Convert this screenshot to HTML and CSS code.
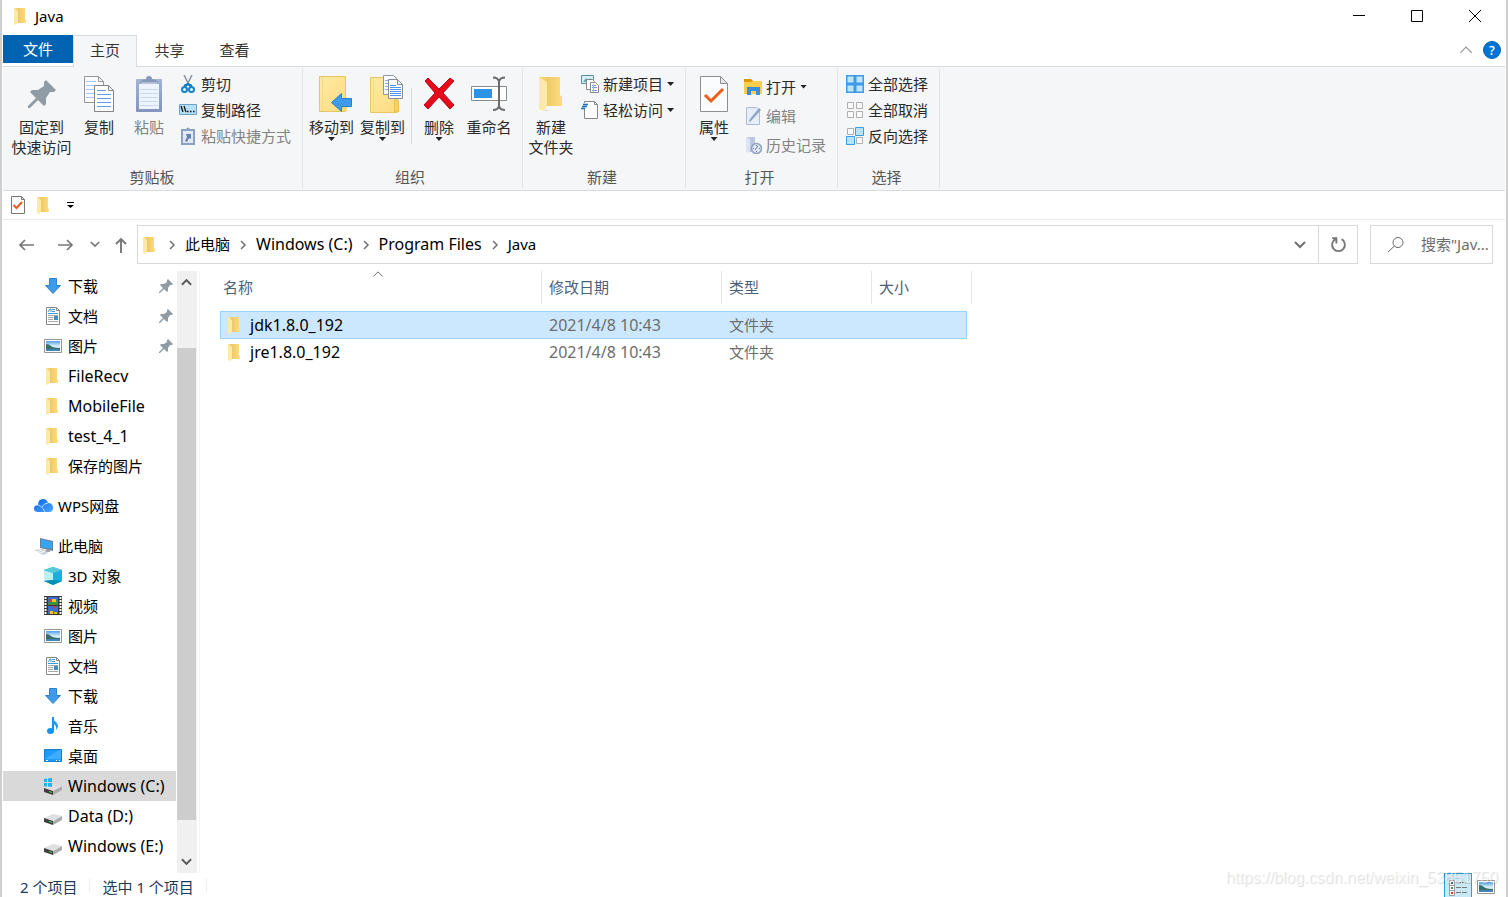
FILE: index.html
```html
<!DOCTYPE html>
<html lang="zh-CN">
<head>
<meta charset="utf-8">
<title>Java</title>
<link rel="stylesheet" href="styles.css">
</head>
<body>
<svg class="sprite" aria-hidden="true">
  <defs>
    <linearGradient id="gFold" x1="0" x2="1" y1="0" y2="1"><stop offset="0" stop-color="#ffeaa4"/><stop offset="1" stop-color="#ffdb80"/></linearGradient>
    <linearGradient id="gBack" x1="0" x2="1"><stop offset="0" stop-color="#e8c461"/><stop offset="1" stop-color="#ffdc80"/></linearGradient>
    <linearGradient id="gCloud" x1="0" x2="1" y1="0" y2="1"><stop offset="0" stop-color="#0a62ee"/><stop offset="1" stop-color="#4aa8fb"/></linearGradient>
    <linearGradient id="gSky" x1="0" x2="0" y1="0" y2="1"><stop offset="0" stop-color="#4f9fe8"/><stop offset=".5" stop-color="#d8effa"/><stop offset="1" stop-color="#8cc4e6"/></linearGradient>
    <linearGradient id="gPaste" x1="0" x2="0" y1="0" y2="1"><stop offset="0" stop-color="#a3b3d3"/><stop offset="1" stop-color="#8294bd"/></linearGradient>
  </defs>
  <symbol id="folder" viewBox="0 0 14 18"><path d="M3 1h9v11l1 1v3H3z" fill="url(#gBack)"/><path d="M1 1l4 3v12l-2 2-2-1z" fill="#ffe9a6"/><path d="M1 1h3l1 3z" fill="#f5d67b"/></symbol>
  <symbol id="bigfolder" viewBox="0 0 26 38"><path d="M5 2h17v18l2 2v9H5z" fill="url(#gBack)"/><path d="M1 2l8 5v23l-3 6-5-2z" fill="#ffe9a6"/><path d="M1 2h6l2 5z" fill="#f3d272"/><path d="M6 36l2-1h3l-3 1z" fill="#ccc"/></symbol>
  <symbol id="pin" viewBox="0 0 14 14"><path d="M9 0l5 5-1 1-2 0-2 3 0 3-1 1-3-3-4 4-1 0 0-1 4-4-3-3 1-1h3l3-2 0-2z" fill="#8f9ca6"/></symbol>
  <symbol id="copy" viewBox="0 0 32 38"><path d="M1.500 1.500h14l5 5v21h-19z" fill="#fafbfc" stroke="#969696"/><path d="M15.500 1.500v5h5" fill="none" stroke="#969696"/><path d="M3 6.500h10M3 10.500h12M3 14.500h12M3 18.500h12M3 22.500h12" stroke="#a9c6f7"/><path d="M11.500 10.500h14l5 5v21h-19z" fill="#fff" stroke="#858585"/><path d="M25.500 10.500v5h5" fill="none" stroke="#858585"/><path d="M14 15.500h9M14 19.500h14M14 23.500h14M14 27.500h14M14 31.500h14" stroke="#5a9bf5"/></symbol>
  <symbol id="paste" viewBox="0 0 28 38"><rect x="1" y="4" width="26" height="33" rx="1" fill="url(#gPaste)"/><path d="M4 9h20v25H4z" fill="#eef4fd"/><path d="M5 14.500h18M5 18.500h18M5 22.500h18M5 26.500h18M5 30.500h18" stroke="#c6d8f3"/><path d="M5 8q0-3 6-4 0-3 3-3t3 3q6 1 6 4z" fill="#8799bd"/><path d="M6 8h16" stroke="#d3dced"/></symbol>
  <symbol id="cut" viewBox="0 0 18 18"><path d="M5 0l6 12M13 0L7 12" stroke="#8a939c" stroke-width="1.500"/><path d="M9 9l-4 2M9 9l4 2" stroke="#0079c1" stroke-width="2"/><circle cx="5.500" cy="14.500" r="2.500" fill="none" stroke="#1585ca" stroke-width="2"/><circle cx="12.500" cy="14.500" r="2.500" fill="none" stroke="#1585ca" stroke-width="2"/></symbol>
  <symbol id="path" viewBox="0 0 18 18"><path d="M.500 3.500h17v10H.500z" fill="#b5e0fc" stroke="#6fa0c5"/><path d="M2 5l2 6M5 5l2 6" stroke="#111" stroke-width="1.300"/><path d="M8 10.500h1.500M11 10.500h1.500M14 10.500h1.500" stroke="#111" stroke-width="1.500"/></symbol>
  <symbol id="pastelink" viewBox="0 0 18 18"><path d="M3 3h12v14H3z" fill="#e1e9f5" stroke="#8ba0c2" stroke-width="2"/><path d="M5 4l2-2q2-3 4 0l2 2z" fill="#8ba0c2"/><path d="M7 7h5v5l-2-1-2 4-2-1 2-4z" fill="#6581ac"/></symbol>
  <symbol id="moveto" viewBox="0 0 34 38"><path d="M1.500 1.500h26v35h-26z" fill="url(#gFold)" stroke="#e8c660"/><path d="M4.500 2v34" stroke="#f5d986"/><path d="M24 36v-12q3-5 5 0v12z" fill="#f9d773"/><path d="M13.500 27.500l10-9v5h10v8h-10v5z" fill="#3d9be9" stroke="#2b80c8"/></symbol>
  <symbol id="copyto" viewBox="0 0 34 40"><path d="M1.500 3.500h26v35h-26z" fill="url(#gFold)" stroke="#e8c660"/><path d="M4.500 4v34" stroke="#f5d986"/><path d="M25.500 38V27q2-4 4 0v11z" fill="#f6d16a" stroke="#e8bf50"/><path d="M14.500 1.500h10l3 3v16h-13z" fill="#f8fbff" stroke="#8e969e"/><path d="M16 6.500h4M16 9.500h3M16 12.500h3M16 15.500h3" stroke="#80aef0"/><path d="M19.500 5.500h9l5 5v14h-14z" fill="#fff" stroke="#858b92"/><path d="M28.500 5.500v5h5" fill="none" stroke="#858b92"/><path d="M21 11.500h6M21 13.500h11M21 15.500h11M21 17.500h11M21 19.500h11M21 21.500h11" stroke="#4b92f3"/></symbol>
  <symbol id="delete" viewBox="0 0 34 34"><path d="M3 4l3-3 11 11L28 1l4 3-11 12 11 12-4 4-11-12L6 32l-4-4 11-12z" fill="#e50b1b" stroke="#b70d19"/></symbol>
  <symbol id="rename" viewBox="0 0 38 36"><path d="M1.500 10.500h35v14h-35z" fill="#fff" stroke="#8a8a8a"/><path d="M4 13h18v9H4z" fill="#2e93e5"/><path d="M29 3v30M23 1.500q5 0 6 4 1-4 6-4M23 34q5 0 6-4 1 4 6 4" fill="none" stroke="#6b6b6b" stroke-width="2"/></symbol>
  <symbol id="newitem" viewBox="0 0 18 18"><path d="M.500.500h12v8H.500z" fill="#d8f0fa" stroke="#5d8ba0"/><path d="M2 7l3-4 2 2 2-2 2 4z" fill="#58a8b4"/><path d="M5.500 4.500h6l2 2v8h-8z" fill="#fff" stroke="#888"/><path d="M9.500 7.500h5l3 3v7h-8z" fill="#fff" stroke="#888"/><path d="M11 10.500h4M11 12.500h5M11 15.500h5" stroke="#6f9de8"/><path d="M12.500 9v8" stroke="#f0a0a0"/></symbol>
  <symbol id="easy" viewBox="0 0 18 18"><path d="M3.500.500h10l3 3v14h-13z" fill="#fff" stroke="#888"/><path d="M13.500.500v3h3" fill="none" stroke="#888"/><path d="M1 2h6v6H0V4z" fill="#f5f6f7"/><path d="M2 3.500h5M1 5.500h5M-1 7.500h5" stroke="#1d72be" stroke-width="1.300"/></symbol>
  <symbol id="prop" viewBox="0 0 28 36"><path d="M.500.500h20l7 7v28H.500z" fill="#fbfcfd" stroke="#8e8e8e"/><path d="M20.500.500v7h7z" fill="#e6e8ea" stroke="#8e8e8e"/><path d="M5 19l6 6L23 13" fill="none" stroke="#f05a1a" stroke-width="3"/></symbol>
  <symbol id="check" viewBox="0 0 14 18"><path d="M.500.500h10l3 3v14H.500z" fill="#fbfcfd" stroke="#777"/><path d="M10.500.500v3h3" fill="none" stroke="#777"/><path d="M2.500 9l3 3L11 6" fill="none" stroke="#f05a1a" stroke-width="2"/></symbol>
  <symbol id="open" viewBox="0 0 18 18"><path d="M0 1h7l2 2h9v13H0z" fill="#ffcf4b"/><path d="M0 1h7l2 2-2 1H0z" fill="#d89a00"/><path d="M3 9h13v8h-4v-4H7v4H3z" fill="#3b8fd9"/></symbol>
  <symbol id="edit" viewBox="0 0 18 18"><path d="M2.500.500h10l3 3v14h-13z" fill="#e5edf8" stroke="#adbcd4"/><path d="M5 14l1 1L17 3l-2-2L6 12z" fill="#8fa5c8"/></symbol>
  <symbol id="history" viewBox="0 0 18 18"><path d="M3 1h8v15H3z" fill="#b9c8df"/><path d="M2 1l4 2v12l-2 2-2-1z" fill="#dae4f2"/><circle cx="12.500" cy="12.500" r="5" fill="#dfe8f4" stroke="#8c9fbd" stroke-width="1.500"/><path d="M12.500 9v1M12.500 15v1M9 12.500h1M15 12.500h1M11 14l3-4" stroke="#667c9e"/></symbol>
  <symbol id="selall" viewBox="0 0 18 18"><path d="M0 0h18v18H0z" fill="#3d9be9"/><path d="M1.500 1.500h6v6h-6zM10.500 1.500h6v6h-6zM1.500 10.500h6v6h-6zM10.500 10.500h6v6h-6z" fill="#c0e4fc"/></symbol>
  <symbol id="selnone" viewBox="0 0 18 18"><path d="M1.500 1.500h6v6h-6zM10.500 1.500h6v6h-6zM1.500 10.500h6v6h-6zM10.500 10.500h6v6h-6z" fill="#fafafa" stroke="#b0b0b0"/></symbol>
  <symbol id="selinv" viewBox="0 0 18 18"><path d="M1.500 1.500h6v6h-6zM10.500 10.500h6v6h-6z" fill="#fafafa" stroke="#b0b0b0"/><path d="M9.500.500h8v8h-8zM.500 9.500h8v8h-8z" fill="#b9e2fd" stroke="#3d9be9"/></symbol>
  <symbol id="down" viewBox="0 0 18 18"><path d="M5.500 1.500h7v7h4L9 16.500 1.500 8.500h4z" fill="#3d9be9" stroke="#2e82cb"/></symbol>
  <symbol id="doc" viewBox="0 0 18 18"><path d="M2.500.500h10l3 3v14h-13z" fill="#fff" stroke="#888"/><path d="M12.500.500v3h3" fill="none" stroke="#888"/><path d="M4 5l2-3h1v3M8 2.500h3M8 4.500h3M4 6.500h10" fill="none" stroke="#3c9ad8"/><path d="M4 8.500h10M4 10.500h5M4 12.500h5M4 14.500h10" stroke="#a8a8a8"/><path d="M10 9h4v4h-4z" fill="#3d8fcb"/></symbol>
  <symbol id="pic" viewBox="0 0 18 18"><path d="M.500 2.500h17v13H.500z" fill="#fff" stroke="#959595"/><path d="M2 4h14v10H2z" fill="url(#gSky)"/><path d="M2 7q3 0 5 2t9 2v1H2z" fill="#3b6d68"/><path d="M2 12h14v2H2z" fill="#4384b4"/></symbol>
  <symbol id="cloud" viewBox="0 0 20 18"><path d="M4 15q-4 0-4-3.500T4 8q0-6 5-6 4 0 5 4 5 0 5 5 0 4-4 4z" fill="url(#gCloud)"/><path d="M2 8q5-1 9 7M8 10q2-4 6-4" fill="none" stroke="#b5dafb"/></symbol>
  <symbol id="pc" viewBox="0 0 20 18"><path d="M6 1l13 3v10L6 11z" fill="#6c8191"/><path d="M7 2l11 3v7L7 10z" fill="#35a6f5"/><path d="M12 12l4 1v2h-5z" fill="#9ba4aa"/><path d="M0 13l9-1 5 4-5 2z" fill="#cbd0d4"/><path d="M2 14l7 2M5 13l6 2" stroke="#f4f4f4"/></symbol>
  <symbol id="cube" viewBox="0 0 18 18"><path d="M9 0l9 3v11l-9 4-9-4V3z" fill="#0aa2c4"/><path d="M0 3l9 3v7l-9 1z" fill="#bdf0f2"/><path d="M9 6l9-3v11l-9-1z" fill="#1bb0dc"/><path d="M0 3l9-3 9 3-9 3z" fill="#56cbd8"/><path d="M0 14l9-1 9 1-9 4z" fill="#078faf"/></symbol>
  <symbol id="video" viewBox="0 0 18 20"><path d="M0 0h18v19H0z" fill="#383838"/><path d="M1.500 1v18M16.500 1v18" stroke="#fff" stroke-width="2" stroke-dasharray="2 1"/><path d="M4 1h10v8H4zM4 10h10v8H4z" fill="#3470d5"/><path d="M4 7l3-2 2 1 5-2v5H4z" fill="#408f3e"/><path d="M8 3h4v3H8zM6 15h3v3H6z" fill="#f3c62d"/><path d="M5 3h3v3H5zM9 10h3l-1 3z" fill="#d93e20"/><path d="M10 16h3v2h-3z" fill="#efb126"/></symbol>
  <symbol id="music" viewBox="0 0 18 18"><path d="M9 0v14" stroke="#1592ea" stroke-width="2"/><path d="M9 0q0 3 3 5 4 4 0 8 1-5-3-6z" fill="#1aa0f5"/><ellipse cx="6.500" cy="14" rx="3.500" ry="3" fill="#1592ea"/></symbol>
  <symbol id="desktop" viewBox="0 0 18 18"><path d="M.500 2.500h17v12H.500z" fill="#1e9bfa" stroke="#137dcc"/><path d="M1 12L15 3h2v9z" fill="#3eadff"/><path d="M2 13.500h2M12 13.500h1M15 13.500h1" stroke="#fff"/></symbol>
  <symbol id="drive" viewBox="0 0 18 18"><path d="M9 14l9-5v4l-9 5z" fill="#a9abad"/><path d="M0 11l9-4 9 2-9 5z" fill="#dedfe1"/><path d="M0 11l9 3v4l-9-3z" fill="#3f4041"/><path d="M5 14l3 1v1l-3-1z" fill="#2fdc42"/></symbol>
  <symbol id="windrive" viewBox="0 0 18 18"><use href="#drive"/><path d="M-1 2l4-.500V5h-4zM4 1.500L8 1v4H4zM-1 6h4v3.500L-1 9zM4 6h4v4l-4-.500z" fill="#1cb4f0"/></symbol>
  <symbol id="chevR" viewBox="0 0 8 12"><path d="M2 2l4 4-4 4" fill="none" stroke="#707070" stroke-width="1.500"/></symbol>
  <symbol id="chevD" viewBox="0 0 12 8"><path d="M1 1l5 5 5-5" fill="none" stroke="currentColor" stroke-width="2"/></symbol>
  <symbol id="chevU" viewBox="0 0 12 8"><path d="M1 7l5-5 5 5" fill="none" stroke="currentColor" stroke-width="2"/></symbol>
  <symbol id="thinU" viewBox="0 0 12 8"><path d="M1 6l5-5 5 5" fill="none" stroke="currentColor"/></symbol>
  <symbol id="left" viewBox="0 0 16 16"><path d="M15 8H1M6 3L1 8l5 5" fill="none" stroke="#777" stroke-width="1.700"/></symbol>
  <symbol id="right" viewBox="0 0 16 16"><path d="M0 8h14M9 3l5 5-5 5" fill="none" stroke="#777" stroke-width="1.700"/></symbol>
  <symbol id="up" viewBox="0 0 16 16"><path d="M8 16V2M3 7l5-5 5 5" fill="none" stroke="#777" stroke-width="1.900"/></symbol>
  <symbol id="refresh" viewBox="0 0 16 16"><path d="M11 3a6 6 0 1 1-6 0M2 2h4v5" fill="none" stroke="#777" stroke-width="1.800"/></symbol>
  <symbol id="search" viewBox="0 0 16 16"><circle cx="10" cy="5.500" r="5" fill="none" stroke="#666"/><path d="M6.500 9L0 15" stroke="#666"/></symbol>
  <symbol id="details" viewBox="0 0 18 18"><path d="M.500 1.500h5v5h-5zM.500 6.500h5v5h-5zM.500 11.500h5v5h-5z" fill="#fff" stroke="#999"/><path d="M2 3h2v2H2z" fill="#356b9c"/><path d="M2 8h2v2H2z" fill="#4b845e"/><path d="M2 13h2v2H2z" fill="#cc3325"/><path d="M7 3.500h5M13 3.500h5M7 8.500h5M13 8.500h5M7 13.500h5M13 13.500h5" stroke="#777"/></symbol>
</svg>

<div class="window">
  <header class="titlebar">
    <svg class="ic-folder"><use href="#folder"/></svg>
    <h1 class="title">Java</h1>
    <button class="winbtn" aria-label="最小化"><svg viewBox="0 0 14 14"><path d="M1 6.500h12" stroke="#000"/></svg></button>
    <button class="winbtn" aria-label="最大化"><svg viewBox="0 0 14 14"><path d="M1.500 1.500h11v11h-11z" fill="none" stroke="#000"/></svg></button>
    <button class="winbtn" aria-label="关闭"><svg viewBox="0 0 14 14"><path d="M1 1l12 12M13 1L1 13" stroke="#000"/></svg></button>
  </header>

  <nav class="tabs">
    <button class="tab tab-file">文件</button>
    <button class="tab tab-active">主页</button>
    <button class="tab">共享</button>
    <button class="tab">查看</button>
    <button class="collapse" aria-label="折叠功能区"><svg><use href="#thinU"/></svg></button>
    <button class="help">?</button>
  </nav>

  <div class="ribbon">
    <section class="group group-clip">
      <div class="tools">
        <button class="big big-wide"><span class="art"><svg class="a-pin"><use href="#pin"/></svg></span>固定到<br>快速访问</button>
        <button class="big"><span class="art"><svg class="a-copy"><use href="#copy"/></svg></span>复制</button>
        <button class="big" disabled><span class="art"><svg class="a-paste"><use href="#paste"/></svg></span>粘贴</button>
        <div class="stack">
          <button class="small"><svg><use href="#cut"/></svg>剪切</button>
          <button class="small"><svg><use href="#path"/></svg>复制路径</button>
          <button class="small" disabled><svg><use href="#pastelink"/></svg>粘贴快捷方式</button>
        </div>
      </div>
      <h2 class="caption">剪贴板</h2>
    </section>
    <section class="group group-org">
      <div class="tools">
        <button class="big big-org"><span class="art art-folder"><svg class="a-move"><use href="#moveto"/></svg></span>移动到<i class="caret"></i></button>
        <button class="big big-org"><span class="art art-folder"><svg class="a-copyto"><use href="#copyto"/></svg></span>复制到<i class="caret"></i></button>
        <span class="divider"></span>
        <button class="big"><span class="art"><svg class="a-del"><use href="#delete"/></svg></span>删除<i class="caret"></i></button>
        <button class="big"><span class="art"><svg class="a-ren"><use href="#rename"/></svg></span>重命名</button>
      </div>
      <h2 class="caption">组织</h2>
    </section>
    <section class="group">
      <div class="tools">
        <button class="big"><span class="art"><svg class="a-new"><use href="#bigfolder"/></svg></span>新建<br>文件夹</button>
        <div class="stack">
          <button class="small"><svg><use href="#newitem"/></svg>新建项目<i class="caret"></i></button>
          <button class="small"><svg><use href="#easy"/></svg>轻松访问<i class="caret"></i></button>
        </div>
      </div>
      <h2 class="caption">新建</h2>
    </section>
    <section class="group">
      <div class="tools">
        <button class="big"><span class="art"><svg class="a-prop"><use href="#prop"/></svg></span>属性<i class="caret"></i></button>
        <div class="stack stack-open">
          <button class="small"><svg><use href="#open"/></svg>打开<i class="caret"></i></button>
          <button class="small" disabled><svg><use href="#edit"/></svg>编辑</button>
          <button class="small" disabled><svg><use href="#history"/></svg>历史记录</button>
        </div>
      </div>
      <h2 class="caption">打开</h2>
    </section>
    <section class="group">
      <div class="tools">
        <div class="stack">
          <button class="small"><svg><use href="#selall"/></svg>全部选择</button>
          <button class="small"><svg><use href="#selnone"/></svg>全部取消</button>
          <button class="small"><svg><use href="#selinv"/></svg>反向选择</button>
        </div>
      </div>
      <h2 class="caption">选择</h2>
    </section>
  </div>

  <div class="quick">
    <button aria-label="属性"><svg class="ic-folder"><use href="#check"/></svg></button>
    <button aria-label="新建文件夹"><svg class="ic-folder"><use href="#folder"/></svg></button>
    <button class="quick-more" aria-label="自定义快速访问工具栏"><svg viewBox="0 0 8 8"><path d="M0 1.500h7" stroke="#000"/><path d="M0 4h7L3.500 7z"/></svg></button>
  </div>

  <div class="address">
    <button class="nav" aria-label="后退"><svg><use href="#left"/></svg></button>
    <button class="nav nav-next" aria-label="前进"><svg><use href="#right"/></svg></button>
    <button class="nav nav-recent" aria-label="最近位置"><svg><use href="#chevD"/></svg></button>
    <button class="nav nav-up" aria-label="上移"><svg><use href="#up"/></svg></button>
    <div class="crumbs">
      <svg class="ic-folder"><use href="#folder"/></svg>
      <svg class="sep"><use href="#chevR"/></svg><a href="#pc">此电脑</a>
      <svg class="sep"><use href="#chevR"/></svg><a class="latin" href="#c">Windows (C:)</a>
      <svg class="sep"><use href="#chevR"/></svg><a class="latin" href="#pf">Program Files</a>
      <svg class="sep"><use href="#chevR"/></svg><a href="#java">Java</a>
      <button class="drop" aria-label="以前的位置"><svg><use href="#chevD"/></svg></button>
      <button class="refresh" aria-label="刷新"><svg><use href="#refresh"/></svg></button>
    </div>
    <label class="search"><svg><use href="#search"/></svg><input type="text" aria-label="搜索" placeholder='搜索"Jav...'></label>
  </div>

  <main class="main">
    <aside class="tree">
      <ul class="level2">
        <li><a href="#t1"><svg><use href="#down"/></svg>下载<svg class="pin"><use href="#pin"/></svg></a></li>
        <li><a href="#t2"><svg><use href="#doc"/></svg>文档<svg class="pin"><use href="#pin"/></svg></a></li>
        <li><a href="#t3"><svg><use href="#pic"/></svg>图片<svg class="pin"><use href="#pin"/></svg></a></li>
        <li><a class="latin" href="#t4"><svg class="fold"><use href="#folder"/></svg>FileRecv</a></li>
        <li><a class="latin" href="#t5"><svg class="fold"><use href="#folder"/></svg>MobileFile</a></li>
        <li><a class="latin" href="#t6"><svg class="fold"><use href="#folder"/></svg>test_4_1</a></li>
        <li><a href="#t7"><svg class="fold"><use href="#folder"/></svg>保存的图片</a></li>
      </ul>
      <ul class="level1">
        <li><a href="#wps"><svg><use href="#cloud"/></svg>WPS网盘</a></li>
      </ul>
      <ul class="level1">
        <li><a href="#pc"><svg><use href="#pc"/></svg>此电脑</a></li>
      </ul>
      <ul class="level2 joined">
        <li><a href="#p1"><svg><use href="#cube"/></svg>3D 对象</a></li>
        <li><a href="#p2"><svg class="film"><use href="#video"/></svg>视频</a></li>
        <li><a href="#p3"><svg><use href="#pic"/></svg>图片</a></li>
        <li><a href="#p4"><svg><use href="#doc"/></svg>文档</a></li>
        <li><a href="#p5"><svg><use href="#down"/></svg>下载</a></li>
        <li><a href="#p6"><svg><use href="#music"/></svg>音乐</a></li>
        <li><a href="#p7"><svg><use href="#desktop"/></svg>桌面</a></li>
        <li><a href="#p8" class="latin current"><svg class="spill"><use href="#windrive"/></svg>Windows (C:)</a></li>
        <li><a class="latin" href="#p9"><svg><use href="#drive"/></svg>Data (D:)</a></li>
        <li><a class="latin" href="#p10"><svg><use href="#drive"/></svg>Windows (E:)</a></li>
      </ul>
    </aside>
    <div class="scroll">
      <button aria-label="向上滚动"><svg><use href="#chevU"/></svg></button>
      <div class="thumb"></div>
      <button aria-label="向下滚动"><svg><use href="#chevD"/></svg></button>
    </div>
    <div class="files">
      <table>
        <thead>
          <tr><th>名称<svg class="sort"><use href="#thinU"/></svg></th><th>修改日期</th><th>类型</th><th>大小</th></tr>
        </thead>
        <tbody>
          <tr class="selected"><td class="name latin"><svg class="ic-folder"><use href="#folder"/></svg>jdk1.8.0_192</td><td class="latin">2021/4/8 10:43</td><td>文件夹</td><td></td></tr>
          <tr><td class="name latin"><svg class="ic-folder"><use href="#folder"/></svg>jre1.8.0_192</td><td class="latin">2021/4/8 10:43</td><td>文件夹</td><td></td></tr>
        </tbody>
      </table>
    </div>
  </main>

  <footer class="status">
    <span>2 个项目</span>
    <span>选中 1 个项目</span>
    <button class="view view-on" aria-label="详细信息"><svg><use href="#details"/></svg></button>
    <button class="view" aria-label="大图标"><svg><use href="#pic"/></svg></button>
  </footer>
  <p class="watermark">https://blog.csdn.net/weixin_53851750</p>
</div>
</body>
</html>
```
FILE: styles.css
```css
* { box-sizing: border-box; }
body {
  margin: 0;
  background: #cfcfcf;
  color: #000;
  font: 15px/20px "Noto Sans", "Noto Sans CJK SC", sans-serif;
}
button, input { font: inherit; color: inherit; }
button { margin: 0; padding: 0; border: 0; background: none; }
h1, h2, p, ul { margin: 0; padding: 0; font-size: inherit; font-weight: normal; }
ul { list-style: none; }
a { color: inherit; text-decoration: none; }
svg { display: block; flex: none; }
.sprite { position: absolute; width: 0; height: 0; }
.latin { font-size: 16px; }

.window {
  position: relative;
  display: flex;
  flex-direction: column;
  height: 100vh;
  margin: 0 2px;
  padding: 0 1px;
  background: #fff;
  overflow: hidden;
}
.ic-folder { width: 14px; height: 18px; }

.titlebar { display: flex; align-items: center; height: 35px; padding: 0 1px 3px 10px; }
.title { flex: 1; margin-left: 8px; }
.winbtn { display: grid; place-items: center; width: 58px; height: 32px; }
.winbtn svg { width: 14px; height: 14px; }

.tabs { display: flex; height: 32px; border-bottom: 1px solid #dadbdc; }
.tab { width: 65px; height: 30px; color: #333; }
.tab-file { width: 70px; height: 28px; background: #0063b1; color: #fff; }
.tab-active {
  width: 64px;
  height: 32px;
  padding-bottom: 3px;
  background: #f5f6f7;
  border: 1px solid #dadbdc;
  border-bottom: 0;
}
.collapse { margin-left: auto; height: 30px; color: #999; }
.collapse svg { width: 14px; height: 9px; }
.help {
  width: 18px;
  height: 18px;
  margin: 6px 4px 0 10px;
  border-radius: 50%;
  background: #0074d4;
  border: 1px solid #0062b5;
  color: #fff;
  font-size: 13px;
  font-weight: 500;
  line-height: 16px;
}

.ribbon { display: flex; flex: none; padding: 2px 0; background: #f5f6f7; border-bottom: 1px solid #dadbdc; }
.group {
  display: flex;
  flex-direction: column;
  padding: 0 11px 0 3px;
  border-right: 1px solid #e2e3e4;
}
.group-clip { padding-left: 6px; }
.group-org { padding-right: 8px; }
.tools { display: flex; flex: none; height: 98px; }
.caption { height: 21px; padding-left: 4px; color: #555; text-align: center; }
.group-org .caption { padding: 0; }
.big {
  align-self: flex-start;
  width: 50px;
  padding-top: 4px;
  color: #2a2a2a;
  white-space: nowrap;
}
.big-wide { width: 65px; }
.big-org { width: 51px; }
.art { display: grid; place-items: center; height: 44px; padding-bottom: 2px; }
.art-folder { padding-left: 6px; }
.a-pin { width: 28px; height: 28px; }
.a-copy { width: 32px; height: 38px; }
.a-paste { width: 28px; height: 38px; }
.a-move { width: 34px; height: 38px; }
.a-copyto { width: 34px; height: 40px; }
.a-del { width: 34px; height: 34px; }
.a-ren { width: 38px; height: 36px; }
.a-new { width: 26px; height: 38px; }
.a-prop { width: 28px; height: 36px; }
button:disabled { color: #838383; }
.caret {
  display: block;
  width: 7px;
  height: 4px;
  background: #222;
  clip-path: polygon(0 0, 100% 0, 50% 100%);
}
.big .caret { margin: 0 auto; }
.divider { width: 1px; height: 56px; margin: 19px 2px 0 3px; background: #dadbdc; }
.stack { display: grid; grid-auto-rows: 26px; align-content: start; padding: 2px 0 0 5px; }
.stack-open { grid-auto-rows: 29px; padding-top: 3px; }
.small { display: flex; align-items: center; gap: 4px; color: #2a2a2a; white-space: nowrap; }
.small svg { width: 18px; height: 18px; }

.quick { display: flex; flex: none; align-items: center; height: 29px; padding-left: 8px; gap: 11px; border-bottom: 1px solid #e8e9ea; }
.quick-more svg { width: 8px; height: 8px; margin-left: 6px; }

.address { display: flex; flex: none; align-items: center; height: 51px; padding: 0 12px 2px 12px; }
.nav { display: grid; place-items: center; width: 24px; height: 30px; margin-right: 15px; }
.nav svg { width: 16px; height: 16px; }
.nav-next { margin-right: 11px; }
.nav-recent { width: 12px; margin-right: 8px; color: #777; }
.nav-recent svg { width: 10px; height: 7px; }
.nav-up { margin-right: 4px; }
.crumbs {
  display: flex;
  flex: 1;
  align-items: center;
  height: 39px;
  padding-left: 4px;
  border: 1px solid #d9d9d9;
}
.crumbs .ic-folder { margin-right: 3px; }
.crumbs a { padding-bottom: 1px; }
.sep { width: 8px; height: 12px; margin: 0 9px; }
.drop { display: grid; place-items: center; width: 36px; height: 37px; margin-left: auto; color: #707070; }
.drop svg { width: 12px; height: 8px; }
.refresh { display: grid; place-items: center; width: 39px; height: 37px; border-left: 1px solid #d9d9d9; }
.refresh svg { width: 17px; height: 17px; }
.search {
  display: flex;
  align-items: center;
  width: 123px;
  height: 39px;
  margin-left: 12px;
  padding-left: 17px;
  border: 1px solid #d9d9d9;
}
.search svg { width: 16px; height: 16px; margin-right: 17px; }
.search input { flex: 1; min-width: 0; padding: 0 0 1px; border: 0; outline: 0; background: none; }
.search input::placeholder { color: #6d6d6d; opacity: 1; }

.main { display: flex; flex: 1; min-height: 0; }
.tree { width: 174px; overflow: hidden; }
.tree ul + ul { margin-top: 10px; }
.tree ul + .joined { margin-top: 0; }
.tree a { display: flex; align-items: center; height: 30px; gap: 6px; padding-right: 4px; white-space: nowrap; }
.tree svg { width: 18px; height: 18px; }
.level2 a { padding-left: 41px; }
.level1 a { padding-left: 31px; }
.level1 svg { width: 20px; margin-right: -2px; }
.tree .fold { width: 14px; margin: 0 3px 0 1px; }
.tree .film { height: 20px; }
.tree .spill { overflow: visible; }
.tree .pin { width: 14px; height: 14px; margin-left: auto; }
.tree .current { width: 173px; background: #d9d9d9; }

.scroll {
  display: grid;
  grid-template-rows: 22px 55fr 472fr 31fr 22px;
  width: 20px;
  padding-right: 1px;
  background: #f0f0f0;
  color: #555;
}
.scroll button { display: grid; place-items: center; }
.scroll button:last-child { grid-row: 5; }
.scroll svg { width: 11px; height: 8px; }
.thumb { grid-row: 3; background: #cdcdcd; }

.files { flex: 1; margin-left: 2px; padding-left: 20px; border-left: 1px solid #f2f2f2; }
.files table, .files thead, .files tbody { display: block; width: 752px; }
.files tr { display: grid; grid-template-columns: 322px 180px 150px 1fr; }
.files thead tr { height: 33px; margin-bottom: 7px; }
.files th {
  position: relative;
  padding: 6px 0 0 7px;
  border-right: 1px solid #e5e5e5;
  color: #4c607a;
  font-weight: normal;
  text-align: left;
}
.files th:first-child { padding-left: 3px; }
.sort { position: absolute; top: 0; left: 152px; width: 12px; height: 7px; color: #555; }
.files tbody tr { width: 747px; height: 26px; border: 1px solid transparent; }
.files tbody .selected { height: 28px; background: #cce8ff; border-color: #99d1ff; }
.files td { display: flex; align-items: center; padding: 0 0 1px 6px; color: #6d6d6d; }
.files .name { gap: 9px; color: #000; }

.status { display: flex; flex: none; align-items: center; height: 24px; padding: 0 5px; color: #1e395b; }
.status span { height: 14px; padding: 0 12px; line-height: 18px; border-right: 1px solid #eee; }
.view { display: grid; place-items: center; width: 28px; height: 24px; padding-top: 4px; }
.view svg { width: 18px; height: 18px; }
.view-on { margin-left: auto; background: #cbe8f6; border: 1px solid #26a0da; border-bottom: 0; }

.watermark {
  position: absolute;
  right: 8px;
  bottom: 9px;
  color: rgba(255, 255, 255, 0.6);
  font: 16px/20px "Liberation Sans", sans-serif;
  text-shadow: 1px 1px 1px rgba(0, 0, 0, 0.15);
  pointer-events: none;
}
```
